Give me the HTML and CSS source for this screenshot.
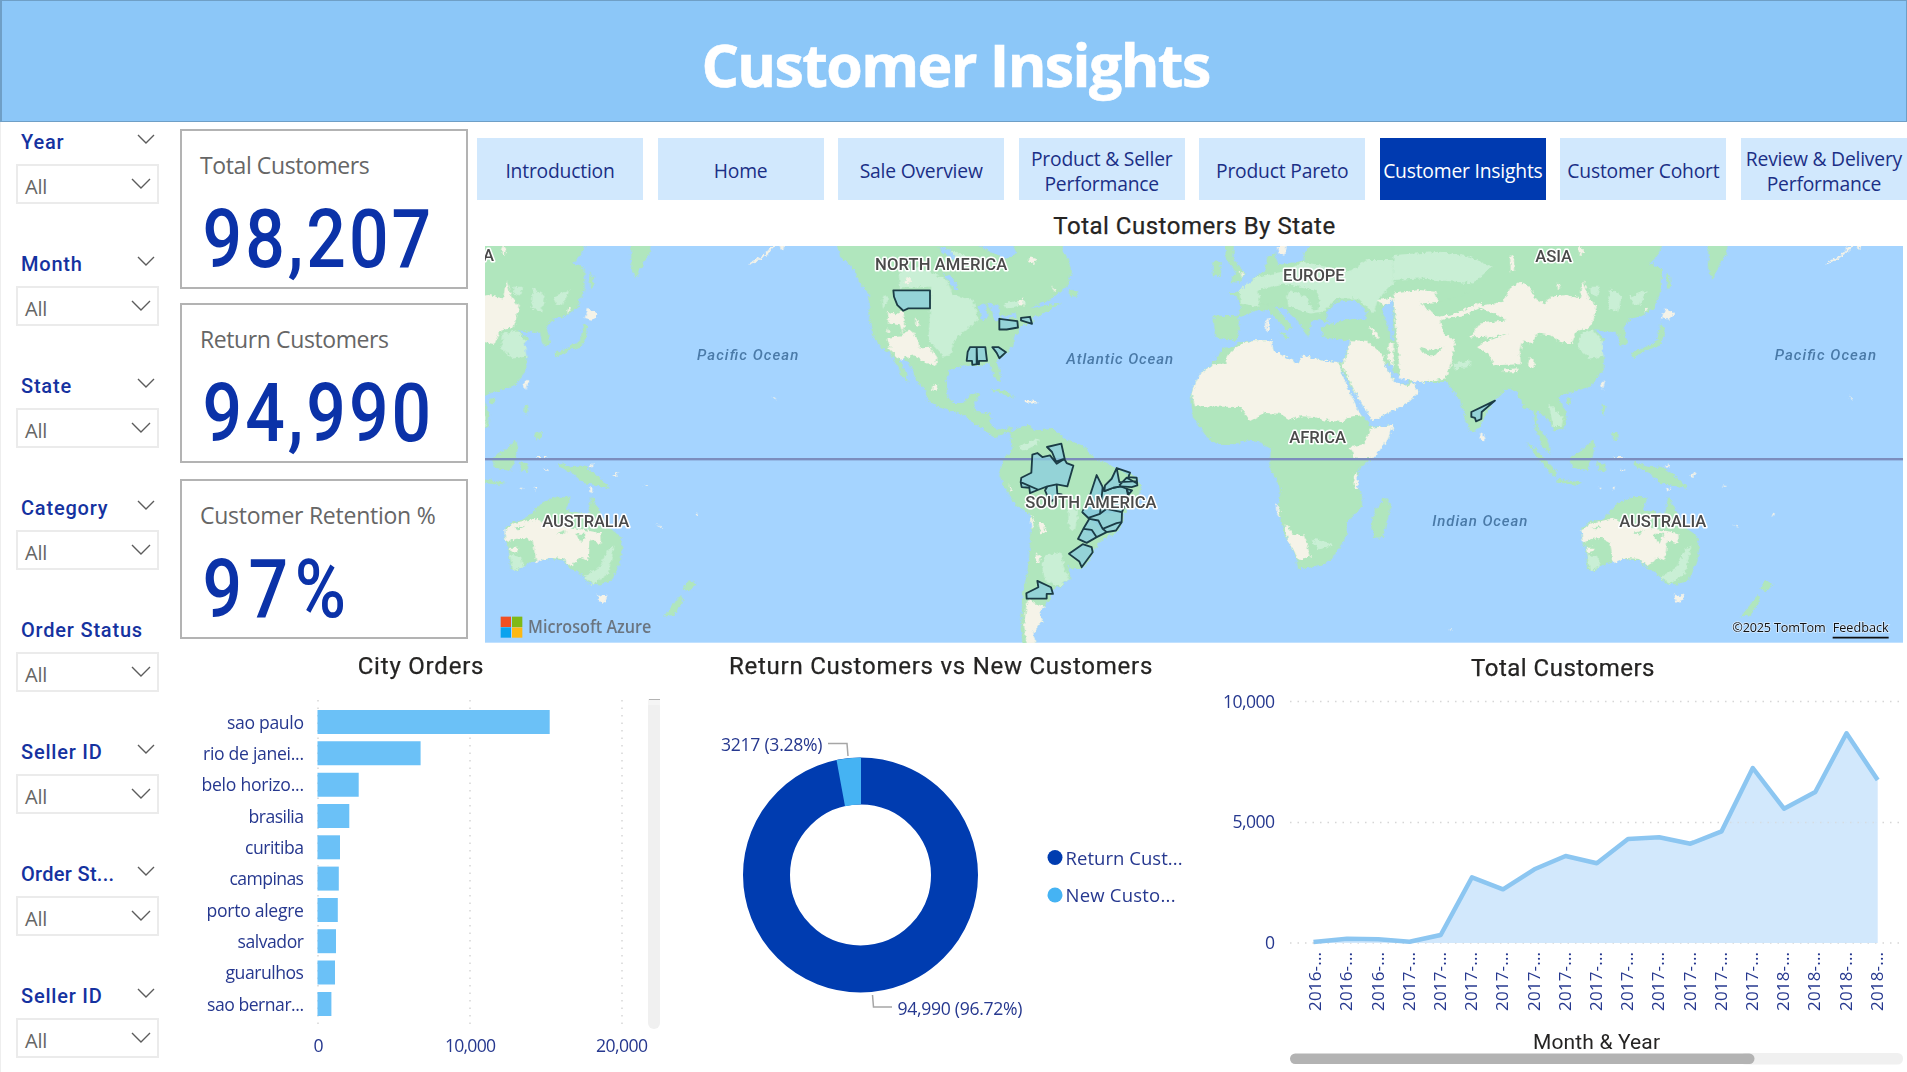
FILE: index.html
```html
<!DOCTYPE html>
<html lang="en">
<head>
<meta charset="utf-8">
<title>Customer Insights</title>
<link rel="stylesheet" href="styles.css">
</head>
<body>
<header class="banner"><h1>Customer Insights</h1></header>
<div class="page">
  <aside class="filters">
    <section class="filter"><div class="filter-head"><span>Year</span><svg class="chev" viewBox="0 0 18 10"><path d="M1 1l8 8 8-8"/></svg></div><div class="select"><span>All</span><svg class="chev" viewBox="0 0 20 11"><path d="M1 1l9 9 9-9"/></svg></div></section>
    <section class="filter"><div class="filter-head"><span>Month</span><svg class="chev" viewBox="0 0 18 10"><path d="M1 1l8 8 8-8"/></svg></div><div class="select"><span>All</span><svg class="chev" viewBox="0 0 20 11"><path d="M1 1l9 9 9-9"/></svg></div></section>
    <section class="filter"><div class="filter-head"><span>State</span><svg class="chev" viewBox="0 0 18 10"><path d="M1 1l8 8 8-8"/></svg></div><div class="select"><span>All</span><svg class="chev" viewBox="0 0 20 11"><path d="M1 1l9 9 9-9"/></svg></div></section>
    <section class="filter"><div class="filter-head"><span>Category</span><svg class="chev" viewBox="0 0 18 10"><path d="M1 1l8 8 8-8"/></svg></div><div class="select"><span>All</span><svg class="chev" viewBox="0 0 20 11"><path d="M1 1l9 9 9-9"/></svg></div></section>
    <section class="filter"><div class="filter-head"><span>Order Status</span></div><div class="select"><span>All</span><svg class="chev" viewBox="0 0 20 11"><path d="M1 1l9 9 9-9"/></svg></div></section>
    <section class="filter"><div class="filter-head"><span>Seller ID</span><svg class="chev" viewBox="0 0 18 10"><path d="M1 1l8 8 8-8"/></svg></div><div class="select"><span>All</span><svg class="chev" viewBox="0 0 20 11"><path d="M1 1l9 9 9-9"/></svg></div></section>
    <section class="filter"><div class="filter-head"><span class="tight">Order St...</span><svg class="chev" viewBox="0 0 18 10"><path d="M1 1l8 8 8-8"/></svg></div><div class="select"><span>All</span><svg class="chev" viewBox="0 0 20 11"><path d="M1 1l9 9 9-9"/></svg></div></section>
    <section class="filter"><div class="filter-head"><span>Seller ID</span><svg class="chev" viewBox="0 0 18 10"><path d="M1 1l8 8 8-8"/></svg></div><div class="select"><span>All</span><svg class="chev" viewBox="0 0 20 11"><path d="M1 1l9 9 9-9"/></svg></div></section>
  </aside>

  <main class="content">
    <div class="top">
      <div class="kpis">
        <article class="kpi"><h2>Total Customers</h2><p>98,207</p></article>
        <article class="kpi"><h2>Return Customers</h2><p>94,990</p></article>
        <article class="kpi"><h2>Customer Retention %</h2><p>97%</p></article>
      </div>
      <div class="map-side">
        <nav class="tabs">
          <a>Introduction</a><a>Home</a><a>Sale Overview</a><a>Product &amp; Seller<br>Performance</a><a>Product Pareto</a><a class="active">Customer Insights</a><a>Customer Cohort</a><a>Review &amp; Delivery<br>Performance</a>
        </nav>
        <h2 class="chart-title map-title">Total Customers By State</h2>
        <svg class="map" viewBox="0 0 4254 1188" preserveAspectRatio="none">
          <defs>
            <filter id="coast" x="-2%" y="-2%" width="104%" height="104%"><feTurbulence type="fractalNoise" baseFrequency="0.09" numOctaves="3" seed="4" result="n"/><feDisplacementMap in="SourceGraphic" in2="n" scale="16" xChannelSelector="R" yChannelSelector="G"/></filter>
            <g id="east">
              <path class="land" d="M-80 0L735 0 710 50 690 70 725 85 725 150 700 205 665 228 635 235 610 260 622 310 604 320 590 275 560 275 525 270 560 300 530 310 552 350 550 390 510 440 440 460 415 470 440 520 435 560 405 572 380 530 350 512 352 560 380 590 392 640 368 622 345 560 340 512 310 500 290 455 260 445 215 490 185 550 165 578 148 570 120 480 105 460 80 425 0 425 -80 400Z"/>
              <path class="light" d="M-80 45L60 35 150 50 215 80 160 130 0 115 -80 120Z M480 280L520 270 545 300 550 350 510 355 475 325Z M570 145L605 165 595 215 565 205Z M510 140L540 140 530 170 512 160Z M630 170L680 150 660 195 638 190Z M100 370L150 360 150 380 100 385Z M385 490L430 530 425 560 400 560Z"/>
              <path class="sand" d="M-80 160L0 150 45 155 60 195 100 210 180 185 190 200 130 225 60 240 70 280 105 300 95 370 75 415 40 420 0 425 -60 415Z"/>
              <path class="sand" d="M270 145L300 125 330 140 345 175 375 190 390 170 440 165 480 175 490 120 505 170 530 200 512 262 470 272 455 312 420 305 390 285 350 280 340 312 310 300 300 340 302 372 222 375 205 340 175 322 200 290 150 292 180 250 260 240 220 220 165 200 250 185Z M330 350l10 10 6 15-10 8-12-10z M250 388l45-4-5 12-38 0z M270 45l12 10 0 35-10 5z M412 130l10 5-8 15z M480 18l12 16-12 12-6-14z"/>
              <path class="land" d="M0 190l60-5 70-20 35-20 20 20-20 30-60 25-50 10z M0 320l35 10 35-10-25 25-20 0-25-15z M160 300l40 5 70-28-60 15z"/>
              <path class="land" d="M865 0L925 0 920 40 898 75 878 118 864 85Z M738 95l12 15 2 30-10 8z M722 248l12 15-4 30-15 25-35 12-40 22-5-12 50-24 25-12z M445 655l45-30 30-25 5 20-10 40-15 32-42-10z M318 604l32 24 60 65-4 20-34-36-52-70z M412 715l75 12-20 6-50-6z M530 665l25 5 0 25-20-3z M545 490l12 10-8 25-5-10z M575 580l20-5 0 18-15 5z M640 665l45 15 40-2 45 32 32 36-42-12-40-6-32-30-40-20z M440 475l15 0-3 18-12-5z"/>
              <path class="sand" d="M735 203l12 8 20 10-20 18-22-5z M542 430l14-12-8 32z M180 578l14 8 2 14-14-2z M675 205l10-3-12 18z M808 705l20-10-8 15z M575 745l10-8-3 12z M535 742l10 0-5 6z M600 685l20 2-12 5z M738 742l12 3-5 12z M735 680l15-12-5 14z M1285 465l12 8 4 10z M940 850l20 12-10-2z M1055 820l10-5-5 12z M905 735l15 2-10 3z M1215 72l48-28 24-26 12 0-35 32-45 24z M1310 18l18 0-15 12z M575 650l40 0-20 6z M90 1162l8 2-6 8z"/>
              <path class="land" d="M484 862L512 844 550 833 600 785 645 768 682 773 668 808 735 822 745 765 770 815 795 860 830 885 838 920 832 965 805 1020 770 1032 735 1028 705 992 682 985 662 960 620 955 565 965 522 990 502 985 497 925 484 890Z M1038 1018l22 12-20 22-20-5z M1012 1063l10 15-30 45-30 5 20-25z"/>
              <path class="sand" d="M484 870L512 848 575 835 620 850 690 862 775 878 776 910 742 900 735 960 710 950 685 978 660 955 620 952 580 965 570 905 545 892 520 895 488 905Z M500 922l28 0-6 12-18 4z M762 1060l12 6 20-4-14 28-14-10z"/>
              <path class="light" d="M500 940L535 950 540 980 510 990Z M720 1010L770 980 795 925 815 915 795 1000 750 1030Z"/>
              <path class="land" d="M515 862l32-6-22 14z M640 878l30-10-5 15z M700 880l30 0-14 28z"/>
            </g>
          </defs>
          <rect class="sea" width="4254" height="1188"/>
          <g filter="url(#coast)">
            <g transform="translate(1395 -18)">
              <!-- the Americas -->
              <path class="land" d="M-340 0L-330 50 -290 85 -268 135 -243 160 -242 240 -230 290 -205 325 -182 335 -165 365 -145 405 -125 430 -132 400 -152 360 -158 335 -120 375 -98 425 -72 450 -70 478 -35 500 0 512 45 525 65 545 95 562 115 578 140 592 160 575 182 580 185 560 140 568 122 555 120 518 78 515 72 490 92 458 60 462 42 488 12 488 -8 470 -12 420 0 390 40 375 80 378 118 370 135 415 152 425 150 390 140 362 165 345 190 315 192 290 208 275 215 255 250 248 250 232 290 215 332 190 295 195 240 205 300 180 350 140 366 95 350 50 325 0Z"/>
              <path class="sea" d="M60 0L180 0 200 40 165 60 120 35Z M-35 18l30 10 40 30-20 5-40-30z M-20 100l30 15 15 35-15-5z M85 195l20-5 10 45-20 5z M110 190l35 5 5 40-15 10-10-35z M150 230l45-12 5 12-40 10z"/>
              <path class="light" d="M-155 95L-90 80 -60 95 -10 120 10 165 70 180 85 240 40 275 15 300 0 345 -20 350 -65 300 -60 215 -60 140 -150 145Z M0 30l40 15 20 15-40 0z M160 190l60-12 10 12-60 15z M-205 180l10-15 12 12-18 30z"/>
              <path class="sand" d="M-186 215L-160 222 -140 212 -136 240 -142 278 -115 270 -95 300 -92 322 -60 320 -38 352 -42 378 -80 365 -105 345 -130 350 -150 360 -185 325 -188 292 -140 288 -150 255 -186 250Z M-105 235l10 5 3 18-12-4z M-52 432l18 8-8 14-12-5z M-190 260l8 15-5 8z M-130 110l14 8-8 16-12-8z M235 50l25 8-8 14-18-6z M205 180l15-5 0 22-15-2z M300 135l20 14-4 4z M165 460l35 12z M220 478l35 4 10 8-40 0z"/>
              <path class="land" d="M120 445l42 6 35 22-30-8-40-14z M356 145l28 10-2 15-25-2z M-220 265l25 25 20 32-12-2-28-35z"/>
              <path class="land" d="M180 580L205 562 230 553 255 570 312 566 350 600 400 615 432 655 470 670 503 685 560 710 574 742 558 785 527 812 518 842 502 872 450 902 432 932 415 965 395 985 370 985 352 975 362 1012 332 1038 306 1046 300 1075 282 1098 268 1112 278 1140 250 1175 258 1212 218 1212 212 1165 218 1060 235 975 246 850 240 822 200 795 170 755 146 700 160 660 188 625Z"/>
              <path class="light" d="M285 945L330 935 345 990 358 1015 330 1036 285 1020 275 975Z M210 615L268 592 262 612 215 635Z M355 800l30 10-10 60-20-10z"/>
              <path class="sand" d="M232 1078L282 1098 268 1112 278 1140 250 1175 258 1212 230 1212 222 1150Z M265 842l15 5 8 30-15 5z M258 938l14 10-4 20-12-8z M175 730l14 20-8 4z M243 825l8 10-2 28-6-8z"/>
              <!-- Africa -->
              <path class="land" d="M820 322L850 322 870 306 905 300 965 300 970 330 1045 370 1058 346 1110 360 1163 365 1192 440 1225 510 1265 560 1332 554 1312 600 1272 650 1228 685 1218 735 1236 760 1236 800 1190 845 1190 885 1150 950 1120 975 1045 986 1035 945 1005 885 984 815 992 745 960 682 962 625 925 605 885 600 860 612 800 610 770 590 728 530 722 460 750 400 790 368Z M1308 768L1322 800 1298 890 1272 892 1264 852 1275 808Z"/>
              <path class="sand" d="M790 372L825 370 835 345 870 312 905 300 965 300 970 330 1045 370 1058 346 1110 360 1163 365 1192 440 1225 510 1235 525 1195 530 1178 545 1120 540 1095 530 1050 528 1020 538 990 520 945 518 900 542 872 500 735 498 724 460 750 400Z M1265 562L1332 554 1312 600 1272 652 1215 655 1200 620 1240 612Z M1003 850L1030 880 1062 885 1082 950 1045 955 1015 905Z M980 790l8 10 2 30-8-10z M1212 700l10-2 2 45-10 0z"/>
              <path class="light" d="M1085 895l40 5 20 15-40 12z"/>
              <!-- Europe and western Asia -->
              <path class="land" d="M790 226L862 228 872 205 860 170 838 160 880 150 912 112 945 92 952 50 975 40 985 75 1060 62 1060 40 1092 0 1420 0 1420 425 1382 418 1408 455 1372 490 1268 542 1225 475 1165 372 1182 360 1200 302 1170 298 1120 292 1112 262 1150 248 1115 240 1085 240 1074 290 1055 265 1040 240 1005 208 975 198 1028 262 1012 270 960 215 930 208 895 220 865 232 868 265 862 298 832 300 795 290Z M828 0L852 0 850 60 885 100 872 128 838 126 858 98 826 50Z M790 64l25 2-3 42-25-2z M985 270l35 22-12 5z"/>
              <path class="light" d="M868 150L920 110 1000 95 1060 65 1200 95 1250 60 1410 60 1412 130 1330 130 1285 175 1270 220 1225 175 1160 175 1120 215 1080 220 1015 200 1010 160 935 150 925 200 872 190Z"/>
              <path class="land" d="M925 150L1000 130 1100 150 1112 200 1090 215 1070 170 1020 150 1000 190 930 195Z"/>
              <path class="sea" d="M1130 215L1160 185 1215 180 1250 215 1245 240 1200 235 1150 250 1128 238Z"/>
              <path class="sand" d="M1202 300L1250 302 1300 345 1303 370 1330 420 1370 440 1385 425 1408 455 1372 490 1268 542 1225 475 1175 372 1190 350Z M1280 180L1345 170 1410 140 1420 140 1420 425 1385 415 1345 405 1325 376 1310 345 1318 310 1352 308 1358 270 1340 230 1350 180 1300 195Z M948 235l8 0 0 42-8-5z M1255 255l20 15 15 25-15 0z M870 95l12 4-6 14z M980 18l30 0-5 30-15-5z"/>
              <path class="sea" d="M1295 205L1330 178 1350 180 1345 210 1335 230 1358 270 1352 306 1325 300 1315 262Z M1303 370L1325 376 1345 405 1382 415 1370 435 1335 425Z"/>
              <path class="land" d="M1255 290l40 15 25 30-6 10-30-22z M1375 300l25-12 20 15 0 12-25-8z"/>
            </g>
            <use href="#east" transform="translate(2805 -18)"/>
            <use href="#east" transform="translate(-426 -18)"/>
          </g>
          <path class="equator" d="M0 639H4254"/>
          <g class="region" transform="translate(1395 -18)">
            <path d="M-170 151L-60 151 -60 205 -125 205 -140 212 -158 195 -168 170Z"/>
            <path d="M148 236L202 243 204 262 170 268 148 268Z M213 233L240 230 246 251 213 241Z"/>
            <path d="M60 321L80 321 82 372 67 374 66 362 50 362 53 335Z M80 321L106 321 111 362 87 362 87 372 80 372Z M127 321L146 321 168 336 148 354 140 338Z"/>
            <path d="M247 643L262 638 277 650 300 645 320 670 343 656 350 668 370 676 352 738 320 732 292 738 265 748 212 725 214 712 244 697Z M212 725L265 748 240 758 238 742 215 740Z M291 620L334 610 344 655 318 664 306 635Z M292 738L320 732 322 760 335 762 300 785 285 750Z"/>
            <path d="M440 704L458 740 463 752 490 742 512 738 530 745 535 770 516 815 515 845 498 870 470 875 440 890 410 907 384 895 400 865 418 835 397 815 420 765Z"/>
            <path d="M463 752L465 735 485 715 500 683 540 697 535 710 560 712 562 735 545 740 512 738 490 742Z M500 683L508 725 562 722 M508 735L530 712 560 728 M530 745L546 750 536 762Z M418 835L445 840 458 865 470 875 M400 865L425 868 440 890 M397 815L415 832 450 820 458 740 M450 820L470 805 515 815 M458 865L500 848 515 845"/>
            <path d="M398 911L425 920 428 935 395 980 388 963 357 940Z M262 1021L303 1040 309 1060 290 1060 290 1074 230 1074 229 1058 265 1040Z"/>
            <path d="M1635 481L1595 515 1594 536 1578 543 1575 533 1564 530 1564 515Z"/>
          </g>
          <g class="continent">
            <text x="-6" y="46">A</text>
            <text x="1170" y="72" textLength="397">NORTH AMERICA</text>
            <text x="2394" y="104" textLength="185">EUROPE</text>
            <text x="3151" y="47" textLength="110">ASIA</text>
            <text x="2413" y="589" textLength="170">AFRICA</text>
            <text x="1621" y="785" textLength="394">SOUTH AMERICA</text>
            <text x="172" y="842" textLength="261">AUSTRALIA</text>
            <text x="3403" y="842" textLength="261">AUSTRALIA</text>
          </g>
          <g class="ocean">
            <text x="636" y="342" textLength="304">Pacific Ocean</text>
            <text x="1744" y="354" textLength="320">Atlantic Ocean</text>
            <text x="2842" y="840" textLength="285">Indian Ocean</text>
            <text x="3869" y="342" textLength="304">Pacific Ocean</text>
          </g>
          <g transform="translate(47 1110)">
            <path fill="#f04f23" d="M0 0h31v31H0z"/><path fill="#7fb916" d="M34 0h31v31H34z"/><path fill="#0aa3ee" d="M0 32h31v31H0z"/><path fill="#fdb813" d="M34 32h31v31H34z"/>
          </g>
          <text class="azure" x="129" y="1160" textLength="370" lengthAdjust="spacingAndGlyphs">Microsoft Azure</text>
          <text class="credit" x="3742" y="1157" textLength="280">©2025 TomTom</text>
          <text class="credit" x="4043" y="1157" textLength="168">Feedback</text>
          <path class="credit-line" d="M4043 1173H4211"/>
        </svg>
      </div>
    </div>

    <div class="bottom">
      <section class="chart">
        <h2 class="chart-title city-title">City Orders</h2>
        <svg class="plot" viewBox="168 690 502 382">
          <path class="grid" d="M318 700V1030M470 700V1030M622 700V1030"/>
          <g class="bar">
            <path d="M317.5 710H549.7V734H317.5z"/><path d="M317.5 741.3H420.6V765.3H317.5z"/><path d="M317.5 772.7H358.7V796.7H317.5z"/><path d="M317.5 804H349.3V828H317.5z"/><path d="M317.5 835.3H340V859.3H317.5z"/><path d="M317.5 866.6H338.8V890.6H317.5z"/><path d="M317.5 898H337.8V922H317.5z"/><path d="M317.5 929.2H336V953.2H317.5z"/><path d="M317.5 960.5H335V984.5H317.5z"/><path d="M317.5 992H331.4V1016H317.5z"/>
          </g>
          <g class="label">
            <text x="227" y="728.800" textLength="77">sao paulo</text><text x="203" y="760" textLength="101">rio de janei...</text><text x="201.500" y="791.300" textLength="102.500">belo horizo...</text><text x="248.500" y="822.500" textLength="55.500">brasilia</text><text x="245" y="854" textLength="59">curitiba</text><text x="229.500" y="885.300" textLength="74.500">campinas</text><text x="206.500" y="916.600" textLength="97.500">porto alegre</text><text x="237.500" y="948" textLength="66.500">salvador</text><text x="225.500" y="979.300" textLength="78.500">guarulhos</text><text x="207" y="1010.500" textLength="97">sao bernar...</text>
            <text x="313.500" y="1051.500" textLength="9">0</text><text x="445" y="1051.500" textLength="51">10,000</text><text x="596" y="1051.500" textLength="52">20,000</text>
          </g>
          <rect x="648" y="700" width="12" height="329" rx="6" fill="#f0f0f0"/><path d="M648 699H660V705H648z" fill="#f5f5f5"/><path d="M649 699.500H660" stroke="#b3b3b3"/>
        </svg>
      </section>
      <section class="chart">
        <h2 class="chart-title donut-title">Return Customers vs New Customers</h2>
        <svg class="plot" viewBox="670 690 540 382">
          <circle cx="860.500" cy="875" r="94" fill="none" stroke="#003cb0" stroke-width="47"/>
          <path fill="#45b3f3" d="M861 757.500A117.500 117.500 0 0 0 836.500 760L845 806.200A70.500 70.500 0 0 1 861 804.500Z"/>
          <path class="leader" d="M828 743.500H847L848 756M872.500 995L873.500 1007H892"/>
          <g class="label">
            <text x="721" y="750.700" textLength="101.500">3217 (3.28%)</text><text x="897.500" y="1015" textLength="125">94,990 (96.72%)</text>
          </g>
          <circle cx="1055" cy="857.500" r="7.500" fill="#003cb0"/><circle cx="1055" cy="895" r="7.500" fill="#45b3f3"/>
          <g class="label legend"><text x="1065.500" y="864.500" textLength="117">Return Cust...</text><text x="1065.500" y="901.500" textLength="110">New Custo...</text></g>
        </svg>
      </section>
      <section class="chart">
        <h2 class="chart-title total-title">Total Customers</h2>
        <svg class="plot" viewBox="1210 690 697 382">
          <path class="grid" d="M1290 701.500H1903M1290 822.500H1903M1290 943H1903"/>
          <path fill="#d0e7fc" fill-opacity=".95" d="M1315.900 943V942.300L1347 938.700 1378.300 939.300 1409.500 942.300 1440.700 935 1472 877.300 1503 889.300 1534.400 869.300 1565.600 856 1596.800 863.300 1628 839 1659.200 837.300 1690.400 843.700 1721.600 831.300 1752.800 768 1784 808.700 1815.300 792 1846.500 733.300 1877.700 780V943Z"/>
          <path class="trend" d="M1313.500 942L1347 938.700 1378.300 939.300 1409.500 941.800 1440.700 935 1472 877.300 1503 889.300 1534.400 869.300 1565.600 856 1596.800 863.300 1628 839 1659.200 837.300 1690.400 843.700 1721.600 831.300 1752.800 768 1784 808.700 1815.300 792 1846.500 733.300 1877.700 780"/>
          <path class="grid faint" d="M1730 822.500H1877"/>
          <g class="label">
            <text x="1223" y="708" textLength="52">10,000</text><text x="1232.500" y="828" textLength="42.500">5,000</text><text x="1265" y="948.500" textLength="9.500">0</text>
            <g class="ticks">
              <text transform="translate(1321 1011) rotate(-90)" textLength="59">2016-...</text><text transform="translate(1352.200 1011) rotate(-90)" textLength="59">2016-...</text><text transform="translate(1383.500 1011) rotate(-90)" textLength="59">2016-...</text><text transform="translate(1414.700 1011) rotate(-90)" textLength="59">2017-...</text><text transform="translate(1446 1011) rotate(-90)" textLength="59">2017-...</text><text transform="translate(1477 1011) rotate(-90)" textLength="59">2017-...</text><text transform="translate(1508.200 1011) rotate(-90)" textLength="59">2017-...</text><text transform="translate(1539.500 1011) rotate(-90)" textLength="59">2017-...</text><text transform="translate(1570.700 1011) rotate(-90)" textLength="59">2017-...</text><text transform="translate(1602 1011) rotate(-90)" textLength="59">2017-...</text><text transform="translate(1633 1011) rotate(-90)" textLength="59">2017-...</text><text transform="translate(1664.300 1011) rotate(-90)" textLength="59">2017-...</text><text transform="translate(1695.500 1011) rotate(-90)" textLength="59">2017-...</text><text transform="translate(1726.700 1011) rotate(-90)" textLength="59">2017-...</text><text transform="translate(1758 1011) rotate(-90)" textLength="59">2017-...</text><text transform="translate(1789 1011) rotate(-90)" textLength="59">2018-...</text><text transform="translate(1820.400 1011) rotate(-90)" textLength="59">2018-...</text><text transform="translate(1851.600 1011) rotate(-90)" textLength="59">2018-...</text><text transform="translate(1882.800 1011) rotate(-90)" textLength="59">2018-...</text>
            </g>
          </g>
          <text class="axis-name" x="1533" y="1048.500" textLength="127">Month &amp; Year</text>
          <rect x="1740" y="1053" width="163" height="11.500" rx="5.500" fill="#f0f0f0"/><rect x="1290" y="1053.500" width="464.500" height="10.500" rx="5.200" fill="#b3b3b3"/>
        </svg>
      </section>
    </div>
  </main>
</div>
</body>
</html>
```
FILE: styles.css
```css
* { box-sizing: border-box; }
body { margin: 0; width: 1907px; height: 1072px; overflow: hidden; background: #fff; font-family: "Open Sans", "Noto Sans", sans-serif; color: #252423; }
h1, h2, p { margin: 0; font-weight: 400; }
svg { display: block; }

.banner { height: 122px; background: #8cc7f8; border: 1px solid #6f9fc6; border-left-width: 2px; display: flex; align-items: center; justify-content: center; padding: 6px 0 0 3px; }
.banner h1 { color: #fff; font-weight: 700; font-size: 59px; line-height: 80px; letter-spacing: -1.600px; -webkit-text-stroke: .6px #fff; }

.page { display: flex; height: 950px; }
.filters { width: 168px; flex: none; padding: 7px 9px 0 15px; border-left: 1px solid #eee; }
.filter { height: 122px; }
.filter-head { height: 35px; display: flex; justify-content: space-between; padding: 5px 4px 0 5px; font: 500 20px/24px Roboto, sans-serif; letter-spacing: .8px; color: #1532a0; white-space: nowrap; }
.filter-head span { margin-top: -4px; }
.filter-head .tight { letter-spacing: .3px; }
.chev { fill: none; stroke: #5c5c5c; stroke-width: 1.4; }
.filter-head .chev { width: 18px; height: 10px; }
.select { height: 40px; border: 2px solid #ebebeb; display: flex; justify-content: space-between; align-items: center; padding: 5px 6px 0 7px; font-size: 20px; line-height: 24px; color: #666; letter-spacing: -.2px; }
.select .chev { width: 20px; height: 11px; margin-top: -7px; }

.content { flex: 1; min-width: 0; }
.top { display: flex; height: 520px; }
.kpis { width: 301px; padding: 7px 0 0 12px; display: flex; flex-direction: column; gap: 14px; }
.kpi { width: 288px; height: 160px; border: 2px solid #b3b3b3; padding: 17px 0 0 18px; white-space: nowrap; }
.kpi:last-child { margin-top: 2px; }
.kpi h2 { font-size: 23px; line-height: 34px; color: #666; letter-spacing: -.4px; }
.kpi p { font: 500 81px/96px Roboto, sans-serif; color: #0b32a8; letter-spacing: 3.500px; padding: 10px 0 0 3px; transform: scaleX(.86); transform-origin: left; }
.kpi:last-child h2 { letter-spacing: -.25px; }
.kpi:last-child p { letter-spacing: 7.500px; }

.map-side { flex: 1; min-width: 0; padding: 16px 0 0 8px; }
.tabs { display: grid; grid-template-columns: repeat(8, 1fr); column-gap: 14.5px; height: 62px; }
.tabs a { min-width: 0; background: #d1e8fd; color: #1b2f86; font-size: 19.300px; line-height: 25px; letter-spacing: -.2px; display: flex; align-items: center; justify-content: center; text-align: center; white-space: nowrap; padding-top: 3px; }
.tabs .active { background: #003ab0; color: #fff; }
.chart-title { font: 400 24px/30px Roboto, sans-serif; letter-spacing: .5px; color: #252423; text-align: center; white-space: nowrap; -webkit-text-stroke: .25px #252423; }
.map-title { padding: 11px 0 0 5px; height: 46px; }
.map { width: 1418px; height: 396.7px; margin-left: 8px; }

.sea { fill: #a5d4ff; }
.land { fill: #b0e6bd; }
.light { fill: #c9efd5; }
.sand { fill: #f5f3e8; }
.equator { stroke: #7c8dbd; stroke-width: 6; }
.region path { fill: #8ccdde; fill-opacity: .78; stroke: #1b3c46; stroke-width: 5.500; stroke-linejoin: round; }
.continent text { font: 500 50px Roboto, sans-serif; fill: #4a4a4a; stroke: #fff; stroke-width: 9; stroke-linejoin: round; paint-order: stroke; }
.ocean text { font: italic 500 45px Roboto, sans-serif; fill: #4a7aa8; }
.azure { font: 600 54px "Open Sans", sans-serif; fill: #6b7580; }
.credit { font-size: 38px; fill: #111; stroke: #d5eaff; stroke-width: 5; paint-order: stroke; }
.credit-line { stroke: #111; stroke-width: 5; }

.bottom { display: grid; grid-template-columns: 502px 540px 697px; height: 430px; }
.chart { min-width: 0; padding-top: 9px; }
.chart .chart-title { height: 39px; }
.city-title { padding-left: 4px; letter-spacing: .8px; }
.donut-title { padding-left: 2px; letter-spacing: .75px; }
.total-title { padding: 2px 0 0 9px; }
.plot { width: 100%; height: 382px; }
.grid { stroke: #d6d6d6; stroke-width: 1.500; stroke-dasharray: 1.500 6; fill: none; }
.faint { opacity: .7; }
.bar { fill: #6bc1f7; }
.label text { font-size: 17.600px; fill: #26388f; }
.label.legend text { font-size: 18.500px; }
.label .ticks text { font-size: 17px; }
.leader { fill: none; stroke: #a6a6a6; stroke-width: 1.500; }
.trend { fill: none; stroke: #8cc6f1; stroke-width: 4.500; stroke-linejoin: round; }
.axis-name { font: 400 21px Roboto, sans-serif; fill: #252423; }
```
